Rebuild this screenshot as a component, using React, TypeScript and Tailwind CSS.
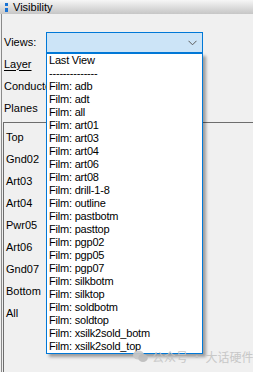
const VIEWS = [
  "Last View",
  "--------------",
  "Film: adb",
  "Film: adt",
  "Film: all",
  "Film: art01",
  "Film: art03",
  "Film: art04",
  "Film: art06",
  "Film: art08",
  "Film: drill-1-8",
  "Film: outline",
  "Film: pastbotm",
  "Film: pasttop",
  "Film: pgp02",
  "Film: pgp05",
  "Film: pgp07",
  "Film: silkbotm",
  "Film: silktop",
  "Film: soldbotm",
  "Film: soldtop",
  "Film: xsilk2sold_botm",
  "Film: xsilk2sold_top",
];

const LAYERS = ["Top", "Gnd02", "Art03", "Art04", "Pwr05", "Art06", "Gnd07", "Bottom", "All"];

export default function App() {
  return (
    <div className="relative w-[253px] h-[372px] overflow-hidden bg-[#f0f0f0] text-[11px] text-black font-['Liberation_Sans',Arial,sans-serif] flex flex-col">
      {/* title bar */}
      <div className="h-[14px] shrink-0 flex items-center bg-gradient-to-b from-[#f6f6f6] to-[#c6c6c6]">
        <div className="ml-[5px] w-[3px] flex flex-col gap-[2px]">
          <div className="h-[3px] bg-[#1a73d4]" />
          <div className="h-[4px] bg-[#1a73d4]" />
        </div>
        <span className="ml-[5px] leading-none text-[11px]">Visibility</span>
      </div>

      {/* body */}
      <div className="flex-1 ml-[1px] border-l border-[#8a8a8a] flex flex-col">
        <div className="mt-[18px] h-[21px] flex items-center">
          <span className="pl-[2px] w-[44px]">Views:</span>
          <div className="w-[157px] h-[21px] bg-[#cce4f7] border border-[#0078d7] flex items-center justify-end pr-[5px]">
            <svg width="9" height="6" viewBox="0 0 9 6">
              <path d="M0.5 0.8 L4.5 4.8 L8.5 0.8" fill="none" stroke="#5a5a5a" strokeWidth="1" />
            </svg>
          </div>
        </div>

        <div className="pl-[2px] flex flex-col">
          <div className="h-[22px] flex items-center underline underline-offset-2">Layer</div>
          <div className="h-[22px] w-[43px] flex items-center overflow-hidden whitespace-nowrap">Conductor</div>
          <div className="h-[22px] flex items-center">Planes</div>
        </div>

        <div className="mt-[3px] ml-[1px] flex-1 border-l border-t border-[#6d6d6d] pt-[3px] pl-[2px] flex flex-col">
          {LAYERS.map((l) => (
            <div key={l} className="h-[22px] flex items-center">{l}</div>
          ))}
        </div>
      </div>

      {/* open dropdown */}
      <div className="absolute left-[46px] top-[53px] w-[157px] bg-white border border-[#0078d7] shadow-[3px_3px_3px_rgba(0,0,0,0.35)] flex flex-col">
        {VIEWS.map((v) => (
          <div key={v} className="h-[13px] pl-[2px] leading-[13px] tracking-[-0.2px] whitespace-nowrap">{v}</div>
        ))}
      </div>

      {/* watermark */}
      <div className="absolute left-[133px] top-[350px] flex items-center gap-[4px] whitespace-nowrap text-[12px] text-[#c4c4c4] font-['Noto_Sans_CJK_SC',sans-serif] opacity-90">
        <svg width="15" height="13" viewBox="0 0 15 13">
          <ellipse cx="5.5" cy="5" rx="5.5" ry="4.6" fill="#c8c8c8" />
          <ellipse cx="10" cy="8" rx="4.8" ry="4" fill="#bdbdbd" />
        </svg>
        <span className="leading-none">公众号 · 大话硬件</span>
      </div>
    </div>
  );
}
